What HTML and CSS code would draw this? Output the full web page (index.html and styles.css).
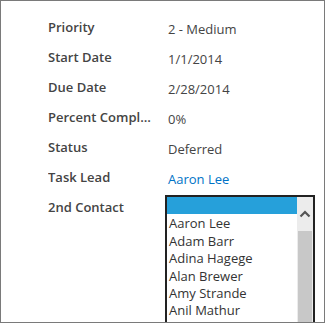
FILE: index.html
```html
<!DOCTYPE html>
<html lang="en">
<head>
    <meta charset="UTF-8" />
    <title>Task Details</title>
    <link rel="stylesheet" href="styles.css">
</head>
<body>
    <div class="frame">
        <div class="row">
            <div class="label">Priority</div>
            <div class="value">2 - Medium</div>
        </div>
        <div class="row">
            <div class="label">Start Date</div>
            <div class="value">1/1/2014</div>
        </div>
        <div class="row">
            <div class="label">Due Date</div>
            <div class="value">2/28/2014</div>
        </div>
        <div class="row">
            <div class="label">Percent Complete</div>
            <div class="value">0%</div>
        </div>
        <div class="row">
            <div class="label">Status</div>
            <div class="value">Deferred</div>
        </div>
        <div class="row">
            <div class="label">Task Lead</div>
            <div class="value"><a href="#" class="link">Aaron Lee</a></div>
        </div>
        <div class="row">
            <div class="label">2nd Contact</div>
            <div class="listbox">
                <ul class="options">
                    <li class="selected">&nbsp;</li>
                    <li>Aaron Lee</li>
                    <li>Adam Barr</li>
                    <li>Adina Hagege</li>
                    <li>Alan Brewer</li>
                    <li>Amy Strande</li>
                    <li>Anil Mathur</li>
                </ul>
                <div class="scrollbar">
                    <div class="arrow">
                        <svg width="12" height="8" viewBox="0 0 12 8">
                            <path d="M1.5 6.5 L6 2 L10.5 6.5" fill="none" stroke="#555" stroke-width="2.2"/>
                        </svg>
                    </div>
                    <div class="thumb"></div>
                </div>
            </div>
        </div>
    </div>
</body>
</html>
```

FILE: styles.css
```css
body {
    margin: 0;
    padding: 0;
    background: #ffffff;
    font-family: "Segoe UI", "Open Sans", sans-serif;
    color: #444444;
}
.frame {
    box-sizing: border-box;
    width: 325px;
    height: 323px;
    border: 1px solid #7a7a7a;
    padding: 16px 0 0 47px;
    overflow: hidden;
}
.row {
    display: flex;
    height: 30px;
}
.label {
    width: 104px;
    margin-right: 16px;
    font-size: 13px;
    font-weight: 600;
    line-height: 20px;
    white-space: nowrap;
    overflow: hidden;
    text-overflow: ellipsis;
}
.value {
    font-size: 13px;
    line-height: 20px;
    padding-top: 2px;
}
.link {
    color: #0072c6;
    text-decoration: none;
}
.listbox {
    display: flex;
    width: 150px;
    height: 130px;
    margin: -2px 0 0 -3px;
    border: 2px solid #222222;
    border-bottom: none;
    box-sizing: border-box;
    flex-shrink: 0;
}
.options {
    flex: 1;
    margin: 0;
    padding: 0;
    list-style: none;
    font-size: 13px;
    color: #333333;
}
.options li {
    height: 17.4px;
    line-height: 18px;
    padding-left: 2px;
    white-space: nowrap;
}
.options .selected {
    background: #26a0da;
}
.scrollbar {
    width: 16px;
    background: #ececec;
    display: flex;
    flex-direction: column;
}
.arrow {
    height: 34px;
    display: flex;
    align-items: center;
    justify-content: center;
}
.thumb {
    flex: 1;
    margin: 0 1px;
    background: #c8c8c8;
}
```
